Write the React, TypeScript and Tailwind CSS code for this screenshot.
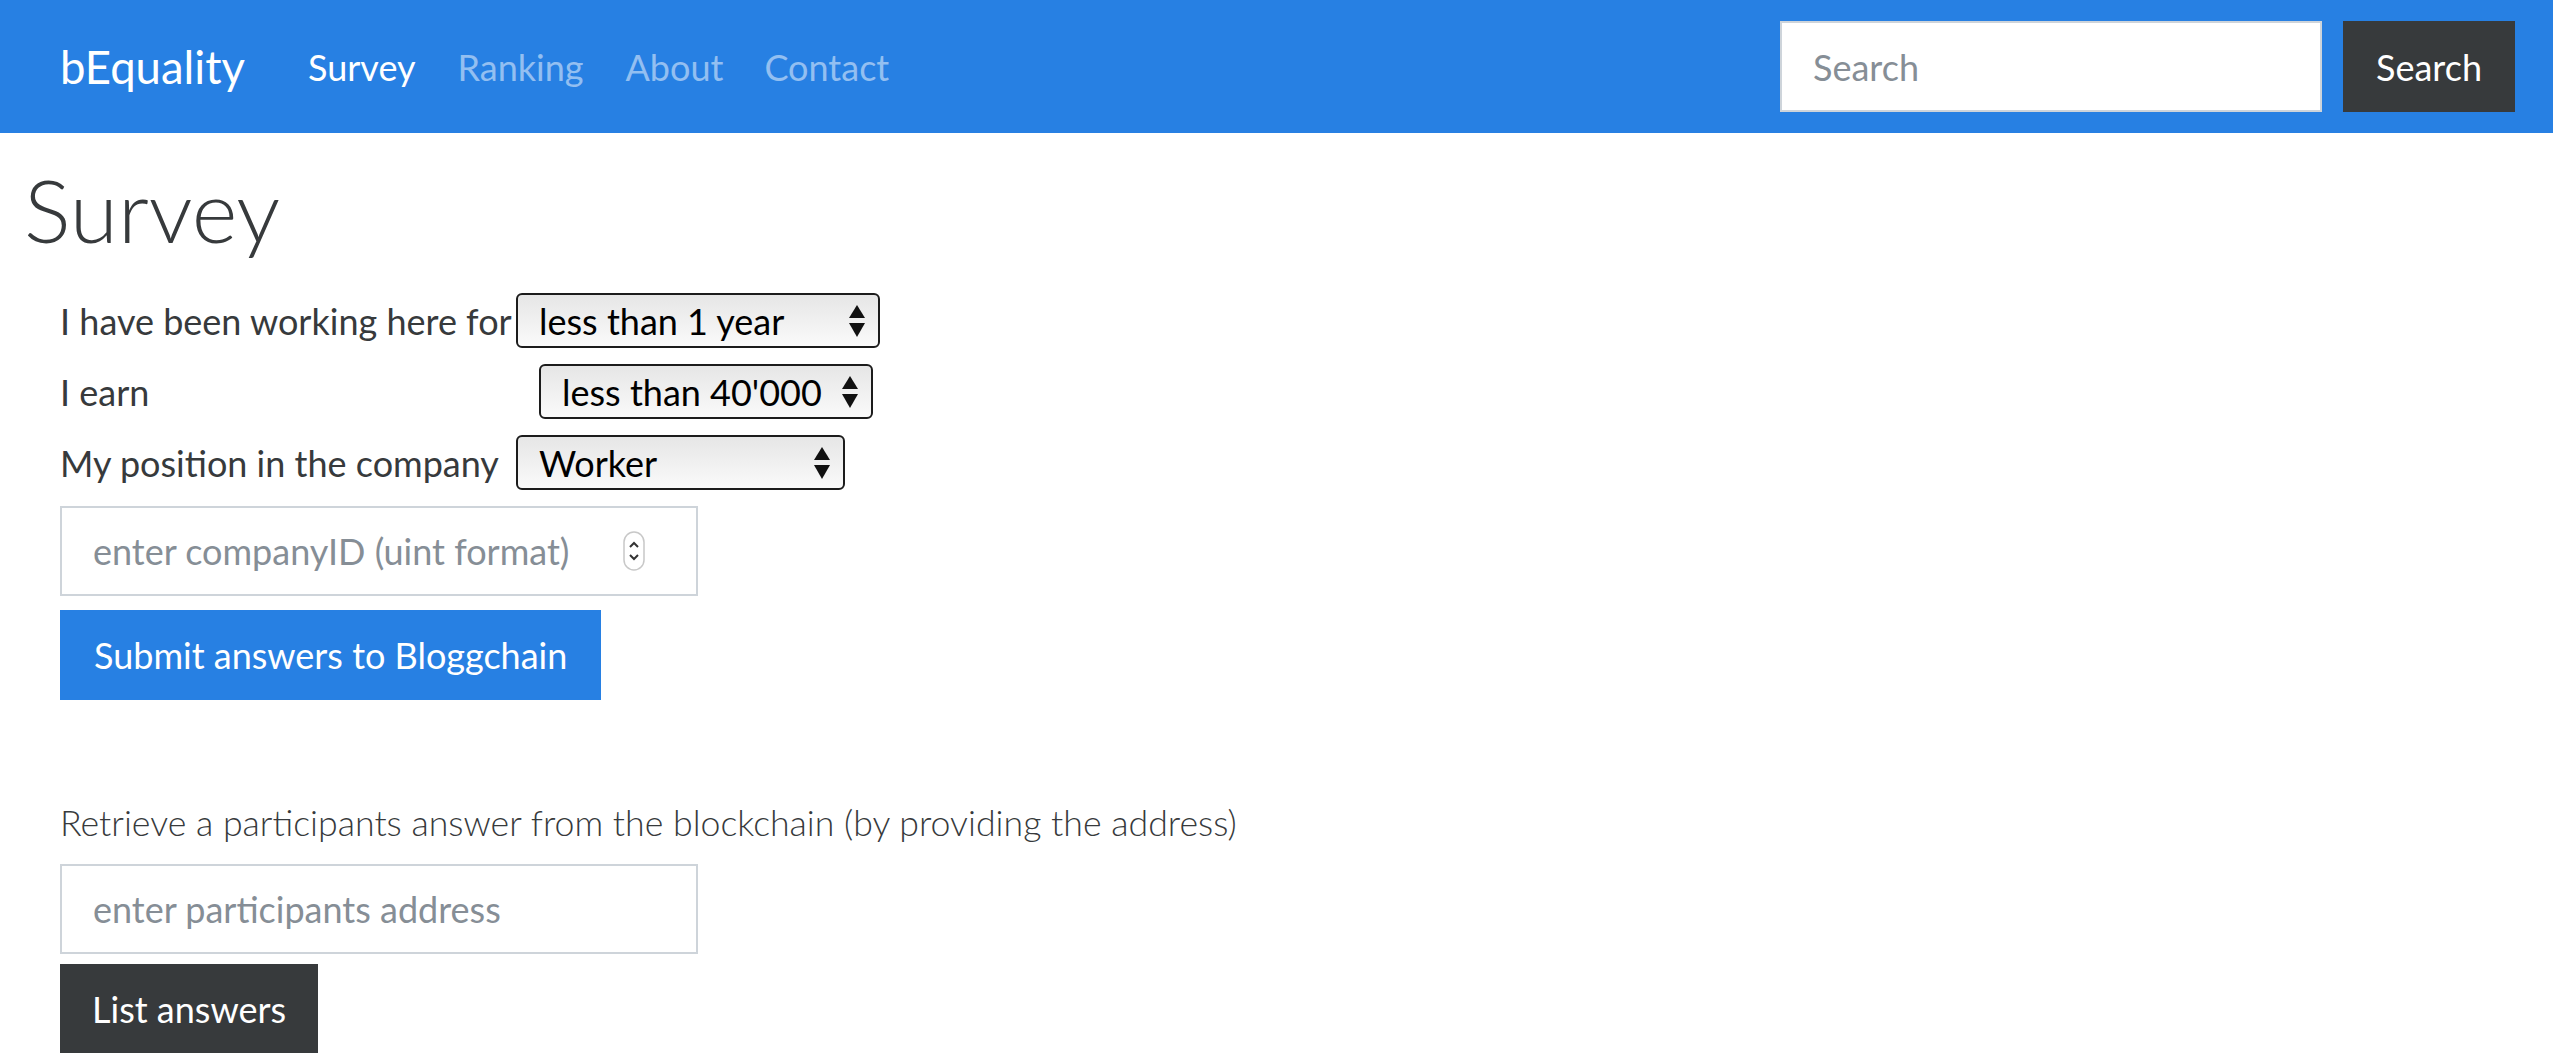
import React from 'react';

const SelectBox: React.FC<{ value: string; className: string }> = ({ value, className }) => {
  return (
    <div
      className={`flex h-[55px] items-center rounded-[6px] border-2 border-[#1c1c1c] bg-gradient-to-b from-[#e6e6e6] to-[#fafafa] pl-[21px] pr-[13px] text-[36px] text-black ${className}`}
    >
      <span className="flex-1 leading-none">{value}</span>
      <svg width="16" height="32" viewBox="0 0 16 32" className="shrink-0">
        <polygon points="0,13 8,0 16,13" fill="#111" />
        <polygon points="0,18 16,18 8,32" fill="#111" />
      </svg>
    </div>
  );
};

const SurveyRow: React.FC<{ label: string; children: React.ReactNode }> = ({ label, children }) => (
  <div className="flex h-[55px] items-center">
    <span className="w-[456px] shrink-0 text-[36px]">{label}</span>
    {children}
  </div>
);

export default function App() {
  return (
    <div className="min-h-screen bg-white font-[Lato,sans-serif] text-[#373a3c]">
      {/* Top navbar */}
      <nav className="flex h-[133px] items-center bg-[#2780e3] pl-[60px] pr-[38px]">
        <a href="#" className="text-[45.5px] leading-none text-white">
          bEquality
        </a>
        <ul className="ml-[42px] flex text-[36px]">
          <li>
            <a href="#" className="px-[21px] text-white">Survey</a>
          </li>
          <li>
            <a href="#" className="px-[21px] text-white/50">Ranking</a>
          </li>
          <li>
            <a href="#" className="px-[21px] text-white/50">About</a>
          </li>
          <li>
            <a href="#" className="px-[20px] text-white/50">Contact</a>
          </li>
        </ul>
        <form className="ml-auto flex gap-[21px]">
          <input
            placeholder="Search"
            className="h-[91px] w-[542px] border-2 border-[#ced4da] bg-white px-[31px] text-[36px] outline-none placeholder:text-[#868e96]"
          />
          <button type="button" className="h-[91px] bg-[#373a3c] px-[33px] text-[36px] text-white">
            Search
          </button>
        </form>
      </nav>

      <main className="px-[24px]">
        <h1 className="mt-[24px] text-[87.5px] font-light leading-[106px]">Survey</h1>

        <div className="pl-[36px]">
          <div className="mt-[30px] flex flex-col gap-[16px]">
            <SurveyRow label="I have been working here for">
              <SelectBox value="less than 1 year" className="w-[364px]" />
            </SurveyRow>
            <SurveyRow label="I earn">
              <SelectBox value="less than 40'000" className="ml-[23px] w-[334px]" />
            </SurveyRow>
            <SurveyRow label="My position in the company">
              <SelectBox value="Worker" className="w-[329px]" />
            </SurveyRow>
          </div>

          <div className="mt-[16px] flex h-[90px] w-[638px] items-center border-2 border-[#ced4da] pl-[31px] pr-[51px]">
            <input
              placeholder="enter companyID (uint format)"
              className="min-w-0 flex-1 text-[36px] outline-none placeholder:text-[#868e96]"
            />
            <svg width="22" height="40" viewBox="0 0 22 40" className="shrink-0">
              <rect x="1" y="1" width="20" height="38" rx="10" fill="#fff" stroke="#c8c8c8" strokeWidth="1.5" />
              <path d="M7 16 L11 12 L15 16" fill="none" stroke="#333" strokeWidth="2" />
              <path d="M7 24 L11 28 L15 24" fill="none" stroke="#333" strokeWidth="2" />
            </svg>
          </div>

          <button type="button" className="mt-[14px] block h-[90px] bg-[#2780e3] px-[34px] text-[36px] text-white">
            Submit answers to Bloggchain
          </button>

          <p className="mt-[96px] text-[35.7px] font-light leading-[54px]">
            Retrieve a participants answer from the blockchain (by providing the address)
          </p>

          <input
            placeholder="enter participants address"
            className="mt-[14px] block h-[90px] w-[638px] border-2 border-[#ced4da] px-[31px] text-[36px] outline-none placeholder:text-[#868e96]"
          />

          <button type="button" className="mt-[10px] block h-[89px] bg-[#373a3c] px-[32px] text-[36px] text-white">
            List answers
          </button>
        </div>
      </main>
    </div>
  );
}
